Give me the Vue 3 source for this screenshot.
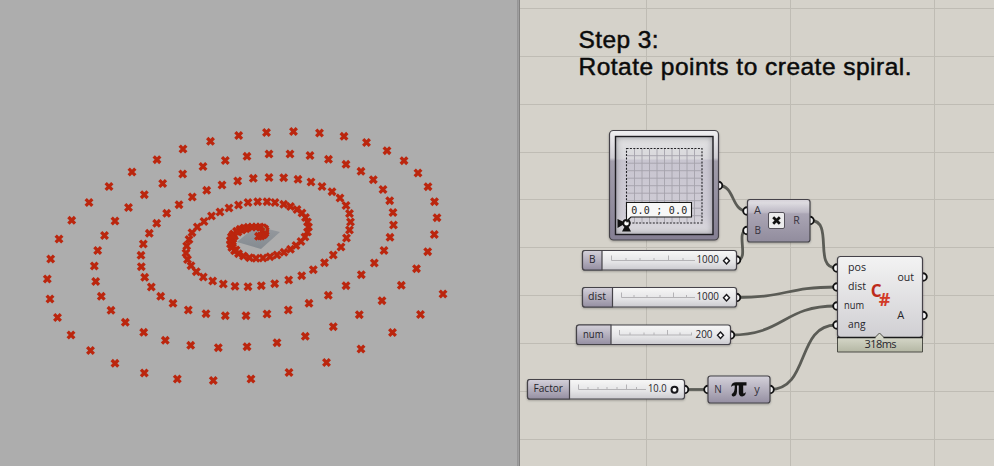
<script setup>
// Spiral samples in viewport space, from the outer end to the centre
const spiral = [
  [443,294],[420.5,314.5],[392.5,332.5],[361,349],[326.5,362.5],[289,372.5],[251,379],[213.3,380.5],[177.3,379],[144.3,373],[115,363.3],[90.5,350.5],[71,335],[57.5,317.5],[50,299],[47.3,279],[50.7,259],[59,239],[71.7,220.3],[89,202.5],[109,186.5],[132,172],[157,159.7],[183,149],[210.5,141.3],[238.7,135.5],[266.5,132.5],[293.5,131.5],[319.5,133],[344,136.3],[366.5,142.5],[387,150.7],[404,160.7],[418,173],[428,186.7],[434.5,201.7],[437,217.7],[434.3,234.5],[427.7,251.7],[416.5,268.7],[401.3,285.3],[382,300.7],[359.3,314.7],[333.3,326.7],[305.3,336.3],[277,342.7],[247,346.7],[218.3,347.7],[190.7,345.3],[165.3,340.3],[143.7,332.3],[125.3,322.3],[111,310.3],[101.3,296.3],[95.7,281.5],[94.3,266],[97.7,250.5],[104.5,235.5],[115,221],[128.5,207.5],[144.3,194.7],[162.7,183.5],[182.7,174],[203,166.5],[225.3,160.5],[247,156.3],[269,154],[290,154],[310,155.5],[328.5,159.3],[346,164.3],[361,171.3],[373.3,179.7],[383,189.5],[389.7,200.7],[393,212.5],[393.5,225],[390,237.3],[384,250.5],[374.3,263],[361.3,274.7],[346,285.7],[328.3,295.3],[309,303.3],[288.3,310],[267,314],[246,315.7],[225.3,315.7],[206,313.7],[188.3,310],[173,303.3],[160.7,296.3],[151.3,287],[144.7,277.3],[141.3,266.7],[141,255.3],[143.3,244],[149.3,233.3],[156.7,223.3],[166.7,213.3],[179,204.7],[192.3,197],[206.7,190.3],[222,185],[237.7,181],[253.3,178.3],[269,177.5],[283.7,177.7],[298,179.3],[311,182],[322,186.5],[332,191.7],[340,198],[346,205.5],[349.5,213.5],[350.5,222],[349.5,230],[346.5,238],[341,247],[333.3,255],[324.5,262.7],[313.3,269.7],[301.7,275.7],[288.7,280],[274.7,283.7],[261.3,285.7],[248,286.7],[235,286.3],[223.3,284],[212.7,281],[203.3,277],[196.3,271.7],[191,265.7],[187.5,259.5],[186,253],[186.7,246],[189,239.5],[192,232.7],[197.3,227],[204,221.5],[211.5,216],[220,212],[229,208],[238.5,205],[248,202.5],[257.7,201.7],[267,201.7],[275,202.5],[283.7,204.3],[290.5,206.5],[297,209.5],[302,213],[305.5,217.5],[307.5,222],[308.5,227],[307.5,232],[305,237],[301,241.5],[296,245.5],[290.5,249.3],[284,252.3],[277,255],[270,256.7],[263,258],[256,258.3],[249.5,257.7],[243.5,256],[238.5,253.7],[234.5,250.7],[231.8,247.5],[230.5,244],[230.3,240.5],[231.3,237],[233.5,234],[236.5,231.3],[240,229.3],[244,228],[248,227.3],[252,227],[256,227],[260,227],[262.8,227.7],[264.7,229],[265.3,231],[265,233],[263.5,234.7],[261,236],[258.5,236.3],
  [232.5,243],[232.7,239],[234.5,236],[232.5,235.5],[238,232],[242,230],[246,228.7],[232.5,246],[236,250]
]

const rows = [8.5, 56.5, 104.5, 152.5, 199.5, 247.5, 295.5, 343.5, 391.5, 439.5]
const columns = [646.5, 790.5, 934.5]

const wires = [
  'M719 185.5C735 185.5 731 211 747 211',
  'M737 260C750 260 735 230.5 747 230.5',
  'M811 220.5C834 220.5 813 268 836 268',
  'M737 297.5C786 297.5 787 287 836 287',
  'M731 335C784 335 783 306 836 306',
  'M685 389.5H708',
  'M770 389.5C810 389.5 796 325 836 325'
]

const ports = [
  [718.5,185.5],[747,211],[747,230.5],[810,220.5],[736.5,260],[736.5,297.5],[730.5,335],[684.5,389.5],
  [708,389.5],[770,389.5],[837,268],[837,287],[837,306],[837,325],[923,277],[923,315.5]
]

const sliders = [
  { name: 'B', x: 582.5, y: 250.5, w: 154, cap: 19.5, nameX: 589, nameW: 6.5, value: '1000', valueX: 696.5, valueW: 22.5, gripX: 726.5, ticks: [611.5,626,640,654,668.5,683], span: [611.5,695], majors: [0,4] },
  { name: 'dist', x: 582.5, y: 287.5, w: 154, cap: 30, nameX: 588, nameW: 18, value: '1000', valueX: 696.5, valueW: 22.5, gripX: 726.5, ticks: [621.5,634,647,660,673.5,686.5], span: [621.5,695], majors: [0,4] },
  { name: 'num', x: 576.5, y: 325, w: 154, cap: 34.5, nameX: 583, nameW: 20.5, value: '200', valueX: 695.5, valueW: 17, gripX: 720.5, ticks: [619.5,630,644,654,667.5,680,691.5], span: [619.5,692], majors: [0,4] },
  { name: 'Factor', x: 527.5, y: 379.5, w: 157, cap: 42, nameX: 533.5, nameW: 29.5, value: '10.0', valueX: 648, valueW: 18.5, gripX: 674.5, round: true, ticks: [578.5,588,598,607,617,626.5,636.5], span: [578.5,646], majors: [0,5] }
]

const labels = [
  ['A', 754, 214.3, 7], ['B', 754.5, 233.5, 6.5], ['R', 793.3, 224, 6.5],
  ['N', 714.3, 392.5, 7.5], ['y', 754.3, 392.5, 5.5],
  ['pos', 848, 270.8, 18], ['dist', 848, 290, 18], ['num', 844, 309, 20], ['ang', 848, 328, 17.5],
  ['out', 897.5, 280.5, 16.5], ['A', 897.3, 319, 7]
]
const cells = [1, 2, 3, 4, 5, 6, 7, 8, 9]
</script>

<template>
  <main class="workspace">
    <section class="viewport">
      <svg width="517" height="466" viewBox="0 0 517 466">
        <defs>
          <linearGradient id="plane" x1="0" y1="0" x2="0" y2="1">
            <stop offset="0" stop-color="#969a9f" />
            <stop offset="1" stop-color="#858b91" />
          </linearGradient>
        </defs>
        <path d="M256 226L280 232L261 249L237 242Z" fill="url(#plane)" />
        <path
          v-for="(p, i) in spiral"
          :key="i"
          class="mark"
          d="M-3.3-3.3L3.3 3.3M3.3-3.3L-3.3 3.3"
          :transform="`translate(${p[0]} ${p[1]})`"
        />
        <path d="M263 226.5L265.5 228.5L265 231" class="axis" />
      </svg>
    </section>
    <div class="divider"></div>
    <section class="canvas">
      <svg width="474" height="466" viewBox="520 0 474 466">
        <defs>
          <linearGradient id="node" x1="0" y1="0" x2="0" y2="1">
            <stop offset="0" stop-color="#d5d2d9" />
            <stop offset=".08" stop-color="#dddbe0" />
            <stop offset=".3" stop-color="#bdb9c5" />
            <stop offset=".34" stop-color="#aaa5b4" />
            <stop offset="1" stop-color="#918c9d" />
          </linearGradient>
          <linearGradient id="soft" x1="0" y1="0" x2="0" y2="1">
            <stop offset="0" stop-color="#d4d1da" />
            <stop offset="1" stop-color="#958fa2" />
          </linearGradient>
          <linearGradient id="light" x1="0" y1="0" x2="0" y2="1">
            <stop offset="0" stop-color="#f3f3f3" />
            <stop offset="1" stop-color="#d0cfd3" />
          </linearGradient>
          <linearGradient id="track" x1="0" y1="0" x2="0" y2="1">
            <stop offset="0" stop-color="#f7f7f7" />
            <stop offset=".6" stop-color="#e4e4e6" />
            <stop offset="1" stop-color="#cbcacf" />
          </linearGradient>
          <linearGradient id="frame" x1="0" y1="0" x2="0" y2="1">
            <stop offset="0" stop-color="#f0eff1" />
            <stop offset=".25" stop-color="#cfcdd3" />
            <stop offset=".28" stop-color="#a29eac" />
            <stop offset="1" stop-color="#857f93" />
          </linearGradient>
          <linearGradient id="well" x1="0" y1="0" x2="0" y2="1">
            <stop offset="0" stop-color="#e2e2e3" />
            <stop offset=".23" stop-color="#d8d7db" />
            <stop offset=".24" stop-color="#c8c5d0" />
            <stop offset=".8" stop-color="#cfccd5" />
            <stop offset="1" stop-color="#dcdbdf" />
          </linearGradient>
          <linearGradient id="badge" x1="0" y1="0" x2="0" y2="1">
            <stop offset="0" stop-color="#dfe0d3" />
            <stop offset="1" stop-color="#b4b7a4" />
          </linearGradient>
          <filter id="shade" x="-30%" y="-30%" width="160%" height="160%">
            <feGaussianBlur stdDeviation="3" />
          </filter>
          <filter id="drop" x="-20%" y="-20%" width="140%" height="150%">
            <feDropShadow dx="0" dy="1" stdDeviation="1.3" flood-color="#000" flood-opacity=".28" />
          </filter>
          <clipPath id="wellClip"><rect x="615.5" y="136.5" width="97.5" height="98" /></clipPath>
        </defs>

        <line v-for="y in rows" :key="'r' + y" x1="520" x2="994" :y1="y" :y2="y" class="grid" />
        <line v-for="x in columns" :key="'c' + x" y1="0" y2="466" :x1="x" :x2="x" class="grid" />

        <text x="578.5" y="47.5" textLength="80" class="title">Step 3:</text>
        <text x="578.5" y="74.5" textLength="333" class="title">Rotate points to create spiral.</text>

        <path v-for="d in wires" :key="d" :d="d" class="wire" />
        <circle v-for="(p, i) in ports" :key="i" :cx="p[0]" :cy="p[1]" r="3.8" class="port" />

        <!-- two-dimensional slider -->
        <rect x="609.5" y="130.5" width="109" height="109.5" rx="4" fill="url(#frame)" class="outline" filter="url(#drop)" />
        <rect x="615.5" y="136.5" width="97.5" height="98" fill="url(#well)" />
        <g clip-path="url(#wellClip)">
          <rect x="613" y="134" width="102.5" height="103" class="inner-shade" filter="url(#shade)" />
        </g>
        <rect x="615.5" y="136.5" width="97.5" height="98" class="bezel" />
        <g class="cell">
          <path v-for="n in cells" :key="n" :d="`M${627 + n * 7.5} 148.5V222.5M627 ${148.2 + n * 7.5}H702`" />
        </g>
        <rect x="626.5" y="148.5" width="75.5" height="74.5" class="range" />
        <path d="M617.5 219L626 223L617.5 228ZM626.5 223L631 231.5H622Z" fill="#111" />
        <circle cx="626.5" cy="223.2" r="3.2" class="handle" />
        <path d="M626.5 221V202.5H691.5V217H631Z" class="tip" />
        <path d="M629.5 218.5L627 222.5" stroke="#111" />
        <text x="631.3" y="213.7" textLength="56" class="mono">0.0 ; 0.0</text>

        <!-- number sliders -->
        <g v-for="s in sliders" :key="s.name">
          <rect :x="s.x" :y="s.y" :width="s.w" height="19.5" rx="2.5" fill="url(#track)" class="outline" filter="url(#drop)" />
          <path
            :d="`M${s.x + s.cap} ${s.y}H${s.x + 2.5}q-2.5 0-2.5 2.5v14.5q0 2.5 2.5 2.5H${s.x + s.cap}Z`"
            fill="url(#soft)"
            class="outline"
          />
          <path :d="`M${s.span[0]} ${s.y + 10}H${s.span[1]}`" class="tick" />
          <path
            v-for="(t, i) in s.ticks"
            :key="t"
            :d="`M${t} ${s.y + (s.majors.includes(i) ? 5 : 7.5)}V${s.y + 10}`"
            class="tick"
          />
          <text :x="s.nameX" :y="s.y + 12.6" :textLength="s.nameW" lengthAdjust="spacingAndGlyphs" class="label">{{ s.name }}</text>
          <text :x="s.valueX" :y="s.y + 12.6" :textLength="s.valueW" lengthAdjust="spacingAndGlyphs" class="label">{{ s.value }}</text>
          <circle v-if="s.round" :cx="s.gripX" :cy="s.y + 10.3" r="3" class="grip strong" />
          <path v-else :d="`M${s.gripX} ${s.y + 7}l3 3.2l-3 3.2l-3-3.2Z`" class="grip" />
        </g>

        <!-- multiplication -->
        <rect x="747.5" y="199.5" width="62.5" height="42.5" rx="2.5" fill="url(#node)" class="outline" filter="url(#drop)" />
        <rect x="768.5" y="212.5" width="16" height="16" rx="1.5" class="icon-box" />
        <path d="M773.2 217.2L779.8 223.8M779.8 217.2L773.2 223.8" class="times" />

        <!-- pi -->
        <rect x="708" y="376" width="62" height="27" rx="2.5" fill="url(#soft)" class="outline" filter="url(#drop)" />
        <path d="M731 387C731.5 383.5 733.2 382.3 736 382.3H746.5V385.6H743.2V392.3C743.2 394.2 744.6 393.8 745.7 392.1C745.9 395 744.3 396.5 742.2 396.5C739.8 396.5 738.8 395 738.8 392.6V385.6H737V391.5C736.7 395 735.5 396.6 733.3 396.4C731.3 396.2 731.2 394.1 732.7 393.3C734.2 392.5 734.8 389.5 734.8 385.6C733.2 385.6 732.2 386 731 387Z" fill="#111" />

        <!-- script component -->
        <rect x="837.5" y="256.5" width="85" height="81" rx="3" fill="url(#light)" class="outline" filter="url(#drop)" />
        <path d="M837.5 337.5H875L879.5 333L884 337.5H922.5V352H837.5Z" fill="url(#badge)" stroke="#4c4d46" />
        <path d="M837 337.5H875.5M883.5 337.5H923" stroke="#1b1b1b" stroke-width="1.5" />
        <text x="870.8" y="297.3" class="sharp">C<tspan x="878.7" y="305.8" class="hash">#</tspan></text>
        <text x="864.5" y="348.3" textLength="32" class="label">318ms</text>

        <text
          v-for="(l, i) in labels"
          :key="'l' + i"
          :x="l[1]"
          :y="l[2]"
          :textLength="l[3]"
          lengthAdjust="spacingAndGlyphs"
          class="label"
          :class="{ dim: i < 5 }"
        >{{ l[0] }}</text>
      </svg>
    </section>
  </main>
</template>

<style>
body { margin: 0; overflow: hidden; }
</style>

<style scoped>
.workspace { display: flex; width: 994px; height: 466px; overflow: hidden; }
svg { display: block; }
.viewport { width: 517px; background: #adadad; }
.divider { width: 3px; background: linear-gradient(90deg, #929292, #a09fa0 55%, #706f6d); }
.canvas { width: 474px; background: #d5d2ca; }
.mark { stroke: #bb260e; stroke-width: 3.3; fill: none; }
.axis { stroke: #9c8060; fill: none; stroke-width: 1; }
.grid { stroke: #bfbcb4; stroke-width: 1; }
.title { font: 24.5px "Liberation Sans", Arial, sans-serif; fill: #0b0b0b; stroke: #0b0b0b; stroke-width: .5; }
.wire { fill: none; stroke: #5b5c56; stroke-width: 2.8; }
.port { fill: #fff; stroke: #111; stroke-width: 1.9; }
.outline { stroke: #454348; stroke-width: 1.2; }
.inner-shade { fill: none; stroke: #55515f; stroke-width: 6; opacity: .55; }
.bezel { fill: none; stroke: #1d1c20; stroke-width: 1.4; }
.cell { fill: none; stroke: #a5a3ab; stroke-width: .9; }
.range { fill: none; stroke: #202024; stroke-width: 1.1; stroke-dasharray: 2 1.4; }
.handle { fill: #fff; stroke: #111; stroke-width: 1.8; }
.tip { fill: #f7f7f7; stroke: #161616; stroke-width: 1.1; }
.mono { font: 10px "DejaVu Sans Mono", monospace; fill: #222; }
.label { font: 11px "Open Sans", "Noto Sans", sans-serif; fill: #26252b; }
.dim { fill: #35323c; }
.tick { stroke: #b4b3b6; stroke-width: 1; fill: none; }
.grip { fill: #fff; stroke: #19181c; stroke-width: 1.4; }
.strong { stroke-width: 2; }
.icon-box { fill: #ececed; stroke: #55525b; stroke-width: 1; }
.times { stroke: #111; stroke-width: 2.7; fill: none; }
.sharp { font: bold 17px "Open Sans", "Noto Sans", sans-serif; fill: #bd2b1b; }
.hash { font-size: 18px; fill: #d23a27; }
</style>
